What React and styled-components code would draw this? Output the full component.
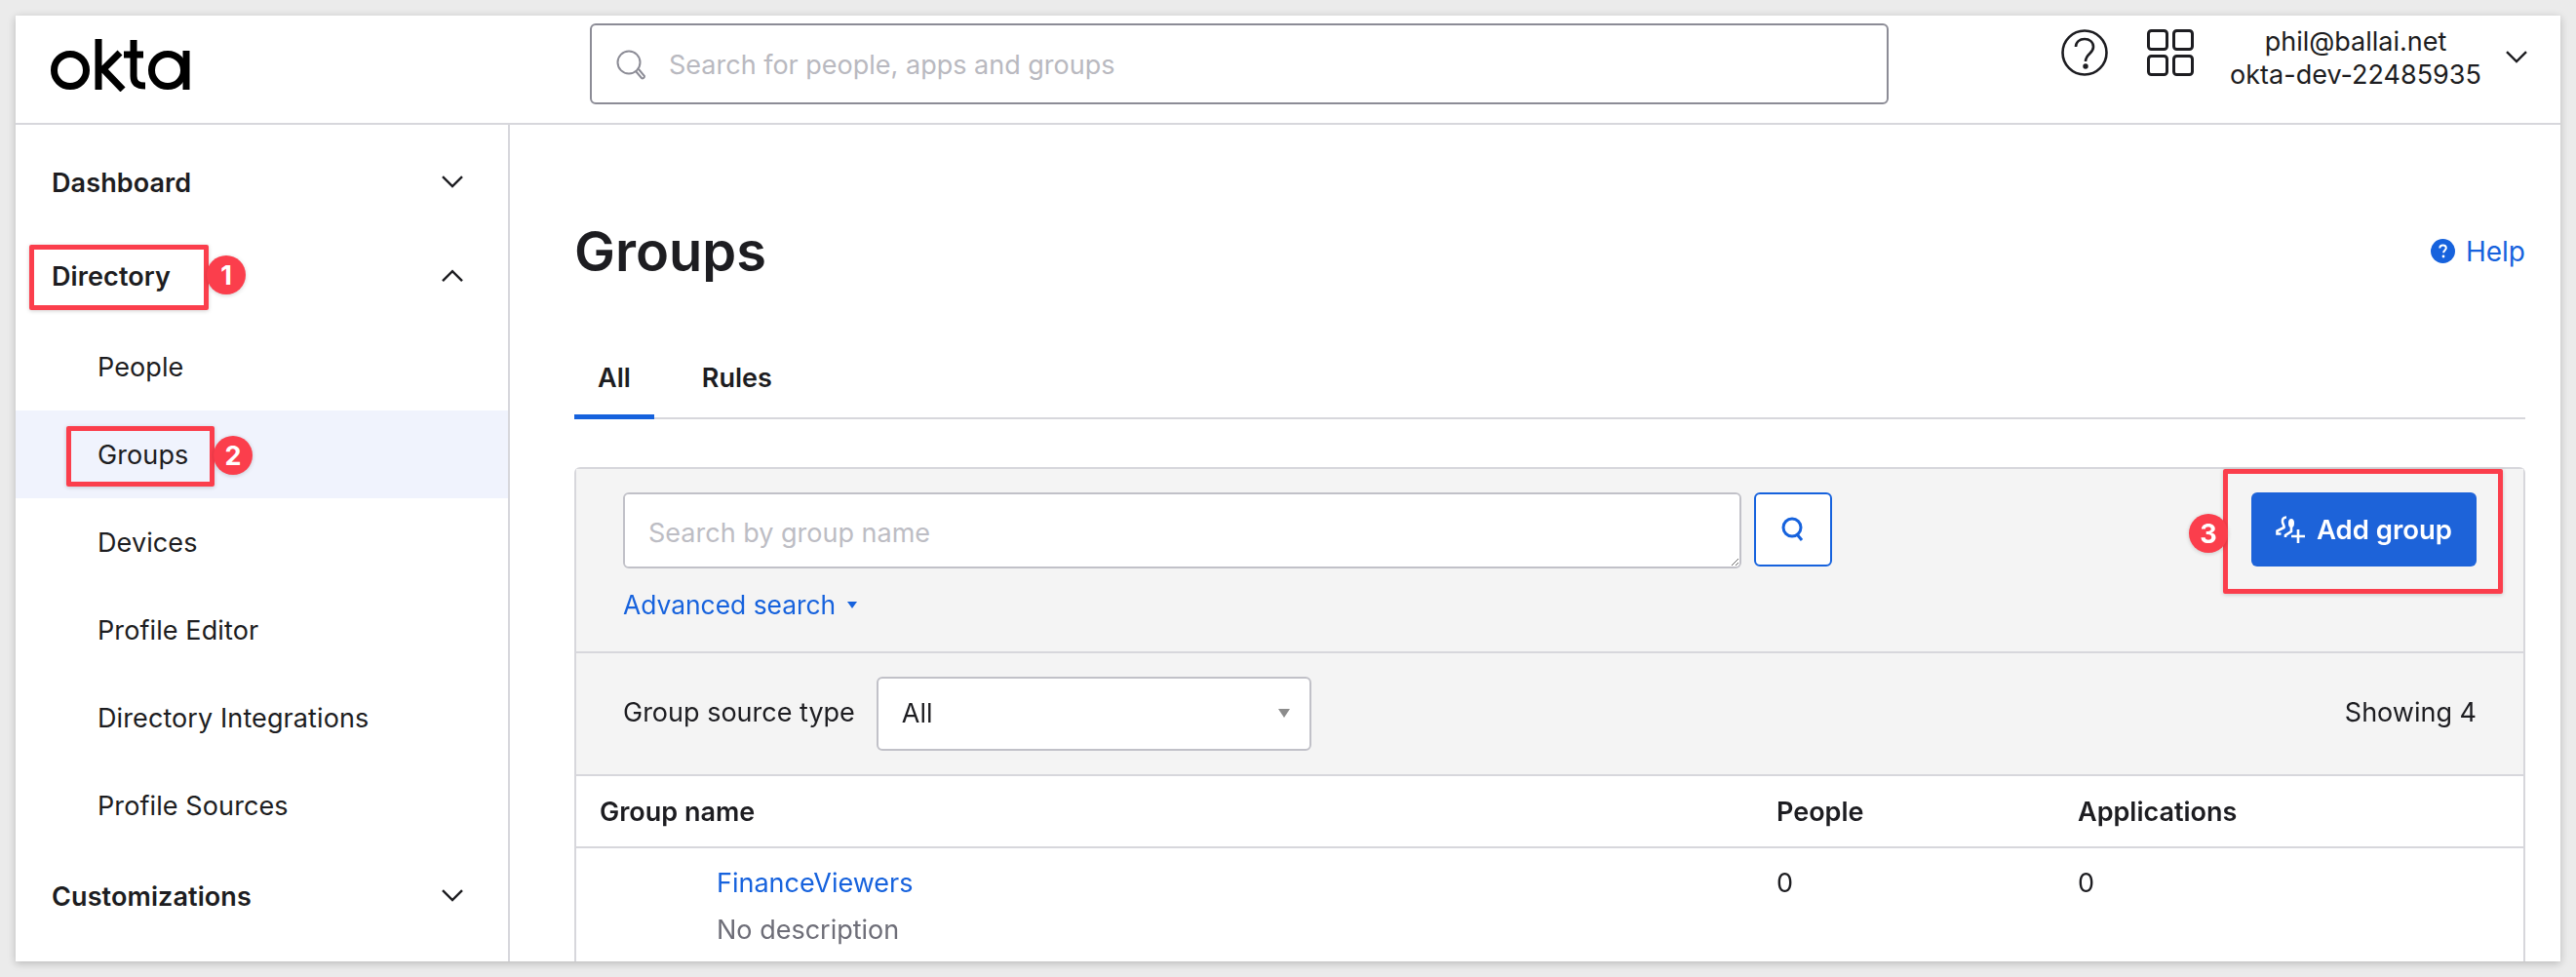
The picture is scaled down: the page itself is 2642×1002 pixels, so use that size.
import React from 'react';
import styled, { createGlobalStyle } from 'styled-components';

const GlobalStyle = createGlobalStyle`
  html, body {
    margin: 0;
    padding: 0;
    height: 1002px;
    overflow: hidden;
    background: #ebebeb;
    font-family: Inter, "Noto Sans", sans-serif;
    color: #1d1d21;
  }
  * { box-sizing: border-box; }
`;

const Frame = styled.div`
  position: relative;
  margin: 16px;
  width: 2610px;
  height: 970px;
  background: #fff;
  box-shadow: 0 2px 8px rgba(0, 0, 0, 0.22);
  overflow: hidden;
  display: flex;
  flex-direction: column;
`;

const TopBar = styled.header`
  flex: none;
  height: 112px;
  border-bottom: 2px solid #d7d7dc;
  display: flex;
  align-items: flex-start;
`;

const LogoCell = styled.div`
  width: 589px;
  padding: 24px 0 0 36px;
`;

const GlobalSearch = styled.div`
  width: 1332px;
  height: 83px;
  margin-top: 8px;
  border: 2px solid #8c8c96;
  border-radius: 6px;
  display: flex;
  align-items: center;
  padding: 2px 0 0 25px;
  gap: 23px;
  font-size: 27px;
  color: #b9b9c0;
`;

const HeaderIcons = styled.div`
  margin-left: 177px;
  margin-top: 14px;
  display: flex;
  gap: 40px;
`;

const UserBlock = styled.div`
  width: 290px;
  margin-left: 21px;
  margin-top: 10px;
  text-align: center;
  font-size: 27px;
  line-height: 34px;
`;

const UserChevron = styled.div`
  margin-top: 33px;
  margin-left: 9px;
`;

const Body = styled.div`
  flex: 1;
  display: flex;
  min-height: 0;
`;

const Sidebar = styled.nav`
  flex: none;
  width: 507px;
  border-right: 2px solid #d7d7dc;
  padding-top: 11px;
`;

const NavHead = styled.div`
  height: 96px;
  padding: 0 46px 0 37px;
  display: flex;
  align-items: center;
  justify-content: space-between;
  font-size: 27px;
  font-weight: 600;
  letter-spacing: 0.1px;
`;

const NavItem = styled.div`
  height: 90px;
  padding-left: 84px;
  display: flex;
  align-items: center;
  font-size: 27px;
  letter-spacing: 0.1px;
  background: ${(p) => (p.$active ? '#f0f3fd' : 'transparent')};
`;

const Main = styled.main`
  flex: 1;
  min-width: 0;
  padding: 0 36px 0 66px;
`;

const TitleRow = styled.div`
  height: 229px;
  padding-top: 30px;
  display: flex;
  align-items: center;
  justify-content: space-between;
`;

const Title = styled.h1`
  margin: 0;
  font-size: 56px;
  font-weight: 600;
  color: #1d1d21;
`;

const HelpLink = styled.a`
  display: flex;
  align-items: center;
  gap: 11px;
  font-size: 28px;
  color: #1662dd;
`;

const Tabs = styled.div`
  display: flex;
  height: 73px;
  border-bottom: 2px solid #d7d7dc;
`;

const Tab = styled.div`
  padding: 0 24px 8px;
  display: flex;
  align-items: center;
  margin-bottom: -2px;
  font-size: 27px;
  font-weight: 600;
  border-bottom: 5px solid ${(p) => (p.$active ? '#1662dd' : 'transparent')};
  margin-right: ${(p) => (p.$active ? '25px' : '0')};
`;

const Panel = styled.section`
  margin-top: 49px;
  border: 2px solid #d7d7dc;
  border-bottom: 0;
  border-radius: 6px 6px 0 0;
`;

const SearchSection = styled.div`
  height: 189px;
  background: #f4f4f4;
  border-bottom: 2px solid #d7d7dc;
  padding: 24px 48px 0 48px;
  display: flex;
  justify-content: space-between;
  align-items: flex-start;
`;

const SearchLeft = styled.div`
  display: flex;
  flex-direction: column;
`;

const SearchRow = styled.div`
  display: flex;
  gap: 13px;
`;

const SearchArea = styled.textarea`
  width: 1147px;
  height: 78px;
  border: 2px solid #c1c1c8;
  border-radius: 6px;
  background: #fff;
  padding: 23px 24px;
  font: 27px Inter, sans-serif;
  outline: none;
  resize: both;
  &::placeholder {
    color: #bdbdc4;
  }
`;

const SearchButton = styled.button`
  width: 80px;
  height: 76px;
  background: #fff;
  border: 2px solid #1662dd;
  border-radius: 6px;
  padding: 0;
  display: flex;
  align-items: center;
  justify-content: center;
`;

const AdvancedLink = styled.a`
  margin-top: 21px;
  display: flex;
  align-items: center;
  gap: 12px;
  font-size: 26.4px;
  color: #1662dd;
`;

const DownMark = styled.span`
  width: 0;
  height: 0;
  border-left: ${(p) => p.$size}px solid transparent;
  border-right: ${(p) => p.$size}px solid transparent;
  border-top: ${(p) => p.$size * 1.5}px solid ${(p) => p.$color};
`;

const AddButton = styled.button`
  width: 231px;
  height: 76px;
  background: #1d63d9;
  border: 0;
  border-radius: 6px;
  color: #fff;
  font: 600 27.5px Inter, sans-serif;
  display: flex;
  align-items: center;
  justify-content: center;
  gap: 11px;
`;

const FilterSection = styled.div`
  height: 126px;
  background: #f4f4f4;
  border-bottom: 2px solid #d7d7dc;
  padding: 0 48px;
  display: flex;
  align-items: center;
  font-size: 27px;
`;

const FilterLabel = styled.span`
  margin-right: 22px;
  margin-bottom: 4px;
`;

const SelectBox = styled.div`
  width: 446px;
  height: 76px;
  background: #fff;
  border: 2px solid #c1c1c8;
  border-radius: 6px;
  padding: 0 20px 2px 24px;
  display: flex;
  align-items: center;
  justify-content: space-between;
`;

const ShowingCount = styled.span`
  margin-left: auto;
  margin-bottom: 4px;
`;

const TableGrid = styled.div`
  display: grid;
  grid-template-columns: 1231px 309px 1fr;
  height: ${(p) => p.$height}px;
  border-bottom: ${(p) => (p.$head ? '2px solid #d7d7dc' : '0')};
  align-items: ${(p) => (p.$head ? 'center' : 'start')};
  font-size: 27px;
  font-weight: ${(p) => (p.$head ? 600 : 400)};
`;

const HeadCell = styled.div`
  padding-left: ${(p) => p.$pad || 0}px;
`;

const RowCell = styled.div`
  padding-top: 18px;
  padding-left: ${(p) => p.$pad || 0}px;
  line-height: 36px;
`;

const GroupLink = styled.div`
  color: #1662dd;
`;

const GroupDesc = styled.div`
  margin-top: 12px;
  color: #6e6e78;
`;

const Callout = styled.div`
  position: absolute;
  left: ${(p) => p.$x - 16}px;
  top: ${(p) => p.$y - 16}px;
  width: ${(p) => p.$w}px;
  height: ${(p) => p.$h}px;
  border: 5px solid #fb3e4c;
  border-radius: 2px;
  box-shadow: 0 1px 4px rgba(0, 0, 0, 0.18);
`;

const Badge = styled.div`
  position: absolute;
  left: ${(p) => p.$x - 16}px;
  top: ${(p) => p.$y - 16}px;
  width: 40px;
  height: 40px;
  border-radius: 50%;
  background: #fb3e4c;
  color: #fff;
  font-size: 27px;
  font-weight: 700;
  display: flex;
  align-items: center;
  justify-content: center;
  box-shadow: 0 1px 4px rgba(0, 0, 0, 0.18);
`;

const Chevron = ({ up, size = 22 }) => (
  <svg width={size} height={size * 0.6} viewBox="0 0 22 13" fill="none" stroke="#1d1d21" strokeWidth="2.4">
    <path d={up ? 'M1 12 11 2l10 10' : 'M1 1l10 10L21 1'} />
  </svg>
);

const OktaLogo = () => (
  <svg width="144" height="54" viewBox="0 0 144 54" fill="none" stroke="#000" strokeWidth="7">
    <circle cx="20" cy="32" r="16.5" />
    <path d="M49 0v52M52 33l19-19M53 30l21 22" />
    <path d="M85 1v37c0 7 4 10 12 10M75 16h20" />
    <circle cx="120" cy="32" r="16.5" />
    <path d="M139 12v40" />
  </svg>
);

const SearchGlyph = () => (
  <svg width="31" height="31" viewBox="0 0 31 31" fill="none" stroke="#8c8c96" strokeWidth="2">
    <circle cx="13" cy="13" r="11.5" />
    <path d="M20 22l6 7c1 1 3 0 3-2l-6-7" />
  </svg>
);

const HelpGlyph = () => (
  <svg width="48" height="48" viewBox="0 0 48 48" fill="none" stroke="#1d1d21" strokeWidth="2.6">
    <circle cx="24" cy="24" r="22.5" />
    <path d="M15 18c0-5 4-8 9-8s9 3 9 8c0 7-8 7-8 15" />
    <circle cx="25" cy="38" r="1.4" fill="#1d1d21" />
  </svg>
);

const GridGlyph = () => (
  <svg width="48" height="48" viewBox="0 0 48 48" fill="none" stroke="#1d1d21" strokeWidth="3">
    <rect x="1.5" y="1.5" width="19" height="19" rx="3" />
    <rect x="27.5" y="1.5" width="19" height="19" rx="3" />
    <rect x="1.5" y="27.5" width="19" height="19" rx="3" />
    <rect x="27.5" y="27.5" width="19" height="19" rx="3" />
  </svg>
);

const HelpDot = () => (
  <svg width="25" height="25" viewBox="0 0 25 25">
    <circle cx="12.5" cy="12.5" r="12.5" fill="#1662dd" />
    <path d="M9.3 9.6c0-2 1.4-3.2 3.3-3.2s3.2 1.200 3.2 2.900c0 2.400-2.700 2.300-2.700 4.900" fill="none" stroke="#fff" strokeWidth="2" />
    <circle cx="13" cy="18" r="1.4" fill="#fff" />
  </svg>
);

const BlueSearch = () => (
  <svg width="26" height="26" viewBox="0 0 26 26" fill="none" stroke="#1662dd" strokeWidth="3">
    <circle cx="12" cy="11" r="9" />
    <path d="M17 18l5 6" />
  </svg>
);

// two people with a plus at the lower right
const AddGroupGlyph = () => (
  <svg width="31" height="28" viewBox="0 0 31 28" fill="none" stroke="#fff" strokeWidth="2.6">
    <path d="M11 1.500c-3 0-4.500 2-4 5 .4 2.500 2 3.500 1.500 5.500L1.500 15.500v3h4" />
    <ellipse cx="16" cy="7.500" rx="3" ry="4.500" fill="#fff" stroke="none" />
    <path d="M16 11v5l-6 4v2" />
    <path d="M23 14v14M16 21h14" />
  </svg>
);

const sideItems = ['People', 'Groups', 'Devices', 'Profile Editor', 'Directory Integrations', 'Profile Sources'];

export default function App() {
  return (
    <>
      <GlobalStyle />
      <Frame>
        <TopBar>
          <LogoCell>
            <OktaLogo />
          </LogoCell>
          <GlobalSearch>
            <SearchGlyph />
            <span>Search for people, apps and groups</span>
          </GlobalSearch>
          <HeaderIcons>
            <HelpGlyph />
            <GridGlyph />
          </HeaderIcons>
          <UserBlock>
            <div>phil@ballai.net</div>
            <div>okta-dev-22485935</div>
          </UserBlock>
          <UserChevron>
            <Chevron />
          </UserChevron>
        </TopBar>
        <Body>
          <Sidebar>
            <NavHead>
              Dashboard
              <Chevron />
            </NavHead>
            <NavHead>
              Directory
              <Chevron up />
            </NavHead>
            {sideItems.map((item) => (
              <NavItem key={item} $active={item === 'Groups'}>
                {item}
              </NavItem>
            ))}
            <NavHead>
              Customizations
              <Chevron />
            </NavHead>
          </Sidebar>
          <Main>
            <TitleRow>
              <Title>Groups</Title>
              <HelpLink>
                <HelpDot />
                Help
              </HelpLink>
            </TitleRow>
            <Tabs>
              <Tab $active>All</Tab>
              <Tab>Rules</Tab>
            </Tabs>
            <Panel>
              <SearchSection>
                <SearchLeft>
                  <SearchRow>
                    <SearchArea placeholder="Search by group name" readOnly />
                    <SearchButton>
                      <BlueSearch />
                    </SearchButton>
                  </SearchRow>
                  <AdvancedLink>
                    Advanced search
                    <DownMark $size={5} $color="#1662dd" />
                  </AdvancedLink>
                </SearchLeft>
                <AddButton>
                  <AddGroupGlyph />
                  Add group
                </AddButton>
              </SearchSection>
              <FilterSection>
                <FilterLabel>Group source type</FilterLabel>
                <SelectBox>
                  All
                  <DownMark $size={6} $color="#8c8c8c" />
                </SelectBox>
                <ShowingCount>Showing 4</ShowingCount>
              </FilterSection>
              <TableGrid $head $height={74}>
                <HeadCell $pad={24}>Group name</HeadCell>
                <HeadCell>People</HeadCell>
                <HeadCell>Applications</HeadCell>
              </TableGrid>
              <TableGrid $height={200}>
                <RowCell $pad={144}>
                  <GroupLink>FinanceViewers</GroupLink>
                  <GroupDesc>No description</GroupDesc>
                </RowCell>
                <RowCell>0</RowCell>
                <RowCell>0</RowCell>
              </TableGrid>
            </Panel>
          </Main>
        </Body>
        <Callout $x={30} $y={251} $w={184} $h={67} />
        <Badge $x={212} $y={262}>1</Badge>
        <Callout $x={68} $y={437} $w={152} $h={62} />
        <Badge $x={219} $y={447}>2</Badge>
        <Callout $x={2280} $y={481} $w={287} $h={128} />
        <Badge $x={2245} $y={527}>3</Badge>
      </Frame>
    </>
  );
}
